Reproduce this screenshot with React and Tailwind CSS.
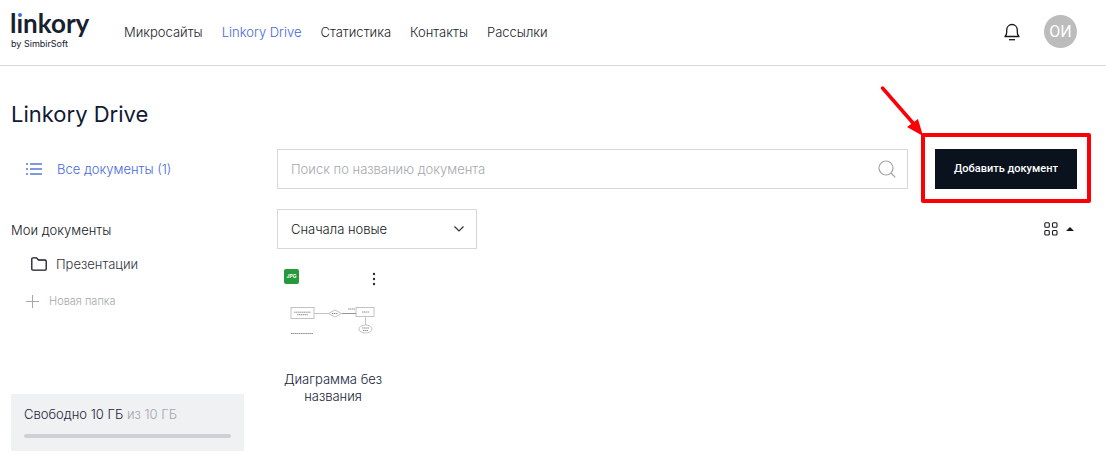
const links = [
  { label: "Микросайты" },
  { label: "Linkory Drive", active: true },
  { label: "Статистика" },
  { label: "Контакты" },
  { label: "Рассылки" },
];

const Logo = () => (
  <a href="#" className="w-[81px] text-[#16202e]">
    <svg viewBox="0 0 81 38" className="block w-full overflow-visible" aria-label="linkory by SimbirSoft">
      <text x="-1" y="20" fontSize="26" fontWeight="700" fill="currentColor" className="font-['Lato',sans-serif]">
        linkory
      </text>
      <rect x="6" y="-2" width="6" height="7" fill="#fff" />
      <circle cx="9" cy="2" r="2" fill="#3b6fd4" />
      <text x="0" y="34" fontSize="9" fontWeight="400" fill="currentColor" className="font-['Inter',sans-serif]">
        by SimbirSoft
      </text>
    </svg>
  </a>
);

const Navbar = () => (
  <header className="flex h-[66px] items-center border-b border-[#d8d8d8] pr-[29px] pb-0.5 pl-[11px]">
    <Logo />
    <nav className="ml-8 flex flex-1 gap-[19px]">
      {links.map((link) => (
        <a key={link.label} href="#" className={link.active ? "text-[#4668dc]" : "text-[#20242c]"}>
          {link.label}
        </a>
      ))}
    </nav>
    <button aria-label="Уведомления" className="mr-[23px]">
      <svg width="18" height="18" viewBox="0 0 18 18" fill="none" stroke="#14181f" strokeWidth="1.3">
        <path d="M2 13.500h14c-1.200-1-1.700-2.300-1.700-4.300V7.200C14.300 3.800 12 1.500 9 1.500S3.700 3.800 3.700 7.200v2c0 2-.5 3.300-1.700 4.300z" strokeLinejoin="round" />
        <path d="M6 16.700h6" />
      </svg>
    </button>
    <button className="h-[33px] w-[33px] rounded-full bg-[#bcbcbc] font-['Roboto',sans-serif] text-base font-normal text-white">ОИ</button>
  </header>
);

const Sidebar = () => (
  <aside className="flex w-[233px] shrink-0 flex-col">
    <a href="#" className="flex h-10 items-center gap-[15px] pl-[15px] text-[#4668dc]">
      <svg width="16" height="12" viewBox="0 0 16 12" fill="none" stroke="#5578d0" strokeWidth="1.500">
        <path d="M0 1h2M4 1h12M0 6h2M4 6h12M0 11h2M4 11h12" />
      </svg>
      Все документы (1)
    </a>
    <h2 className="mt-[31px] text-[#14181f]">Мои документы</h2>
    <a href="#" className="mt-3.5 flex items-center gap-[9px] pl-5 text-[#30343c]">
      <svg width="16" height="14" viewBox="0 0 16 14" fill="none" stroke="#14181f" strokeWidth="1.300">
        <path d="M.8 12V2Q.8.8 2 .8h3.500l2 2.200H14q1.200 0 1.200 1.200V12q0 1.200-1.200 1.200H2Q.8 13.200.8 12z" />
      </svg>
      Презентации
    </a>
    <button className="mt-[17px] flex items-center gap-2.5 pl-[15px] text-[11px] leading-5 text-[#a4a8ad]">
      <svg width="13" height="13" viewBox="0 0 13 13" stroke="currentColor">
        <path d="M6.500 0v13M0 6.500h13" />
      </svg>
      Новая папка
    </button>
    <div className="mt-[83px] bg-[#f0f1f3] px-[13px] pt-2.5 pb-[13px] text-[#20243a]">
      <p>
        Свободно 10 ГБ <span className="text-[#a3a5ae]">из 10 ГБ</span>
      </p>
      <div className="mt-2.5 h-1 rounded-full bg-[#cfd0d5]" />
    </div>
  </aside>
);

const Search = () => (
  <label className="flex h-10 flex-1 items-center border border-[#d6d8da] pr-[11px] pl-[13px]">
    <input
      type="search"
      aria-label="Поиск"
      placeholder="Поиск по названию документа"
      className="min-w-0 flex-1 outline-none placeholder:text-[#a4a8ae]"
    />
    <svg width="18" height="18" viewBox="0 0 18 18" fill="none" stroke="#a0a5ab" strokeWidth="1.200">
      <circle cx="8" cy="8" r="7" />
      <path d="M13 13l4.300 4.300" />
    </svg>
  </label>
);

// Call to action with the red hint frame and arrow over it
const AddButton = () => (
  <div className="relative w-[142px]">
    <button className="h-10 w-full bg-[#0a121d] font-['Roboto',sans-serif] text-[11px] font-medium text-white">Добавить документ</button>
    <div className="pointer-events-none absolute -inset-x-3.5 -top-4 -bottom-3.5 rounded-xs border-4 border-[#fb0007]" />
    <svg className="pointer-events-none absolute -top-16 -left-14" width="46" height="52" viewBox="0 0 46 52">
      <path d="M3.500 3L34 38" stroke="#fb0007" strokeWidth="3.500" strokeLinecap="round" />
      <path d="M28 42L39 34L44 51z" fill="#fb0007" />
    </svg>
  </div>
);

const Diagram = () => (
  <svg width="86" height="32" viewBox="0 0 86 32" fill="none" stroke="#b4b4b4" strokeWidth=".8" className="mx-auto mt-[19px] block">
    <rect x="1" y="2.500" width="23" height="11" />
    <rect x="66" y="2.500" width="18" height="9" />
    <path d="M24 8.500h14.500M52 8.500h14M75.500 11.500v8.500" />
    <path d="M38.500 8.500L45 5l6.500 3.500L45 12z" />
    <path d="M52 8.500h14" stroke="#888" />
    <ellipse cx="75.500" cy="24" rx="6.500" ry="4" />
    <path d="M4 7.200h17M7 9.700h11M42 8.500h6M72 7h7M72 23h7M73 25.500h5M1 28.500h22M58 4h7" stroke="#777" strokeDasharray="1.500 .4" />
  </svg>
);

const DocumentCard = () => (
  <article className="mt-5 w-28">
    <div className="flex items-start justify-between pr-[13px] pl-[7px]">
      <span className="h-[15px] w-[15px] rounded-xs bg-[#26993a] text-center text-[5px] leading-[15px] font-bold text-white">JPG</span>
      <button aria-label="Действия" className="mt-[3px]">
        <svg width="4" height="14" viewBox="0 0 4 14" fill="#2a2e35">
          <circle cx="2" cy="2" r="1.200" />
          <circle cx="2" cy="7" r="1.200" />
          <circle cx="2" cy="12" r="1.200" />
        </svg>
      </button>
    </div>
    <Diagram />
    <p className="mt-[34px] text-center leading-[17px] text-[#20243a]">Диаграмма без названия</p>
  </article>
);

const App = () => {
  return (
    <div className="bg-white font-['Inter','Liberation_Sans',sans-serif] text-[13px] leading-5 font-light">
      <Navbar />
      <main className="pr-[29px] pl-[11px]">
        <h1 className="pt-8 text-[22px] leading-8 font-normal text-[#101a33]">Linkory Drive</h1>
        <div className="mt-[19px] flex gap-[33px]">
          <Sidebar />
          <section className="min-w-0 flex-1">
            <div className="flex gap-[27px]">
              <Search />
              <AddButton />
            </div>
            <div className="mt-5 flex items-center justify-between">
              <div className="relative w-[200px]">
                <select aria-label="Сортировка" className="h-10 w-full appearance-none border border-[#d6d8da] bg-white px-[13px] text-[#14181f]">
                  <option>Сначала новые</option>
                </select>
                <svg className="pointer-events-none absolute top-4 right-3" width="12" height="8" viewBox="0 0 12 8" fill="none" stroke="#30343c" strokeWidth="1.200">
                  <path d="M1.500 1.500L6 6l4.500-4.500" />
                </svg>
              </div>
              <button aria-label="Вид" className="flex items-center gap-2 pr-[3px]">
                <svg width="14" height="14" viewBox="0 0 14 14" fill="none" stroke="#14181f" strokeWidth="1.100">
                  <rect x=".8" y=".8" width="4.500" height="4.500" rx="1" />
                  <rect x="8.500" y=".8" width="4.500" height="4.500" rx="1" />
                  <rect x=".8" y="8.500" width="4.500" height="4.500" rx="1" />
                  <rect x="8.500" y="8.500" width="4.500" height="4.500" rx="1" />
                </svg>
                <svg width="8" height="4" viewBox="0 0 8 4" fill="#14181f">
                  <path d="M0 4L4 0l4 4z" />
                </svg>
              </button>
            </div>
            <DocumentCard />
          </section>
        </div>
      </main>
    </div>
  );
};

export default App;
